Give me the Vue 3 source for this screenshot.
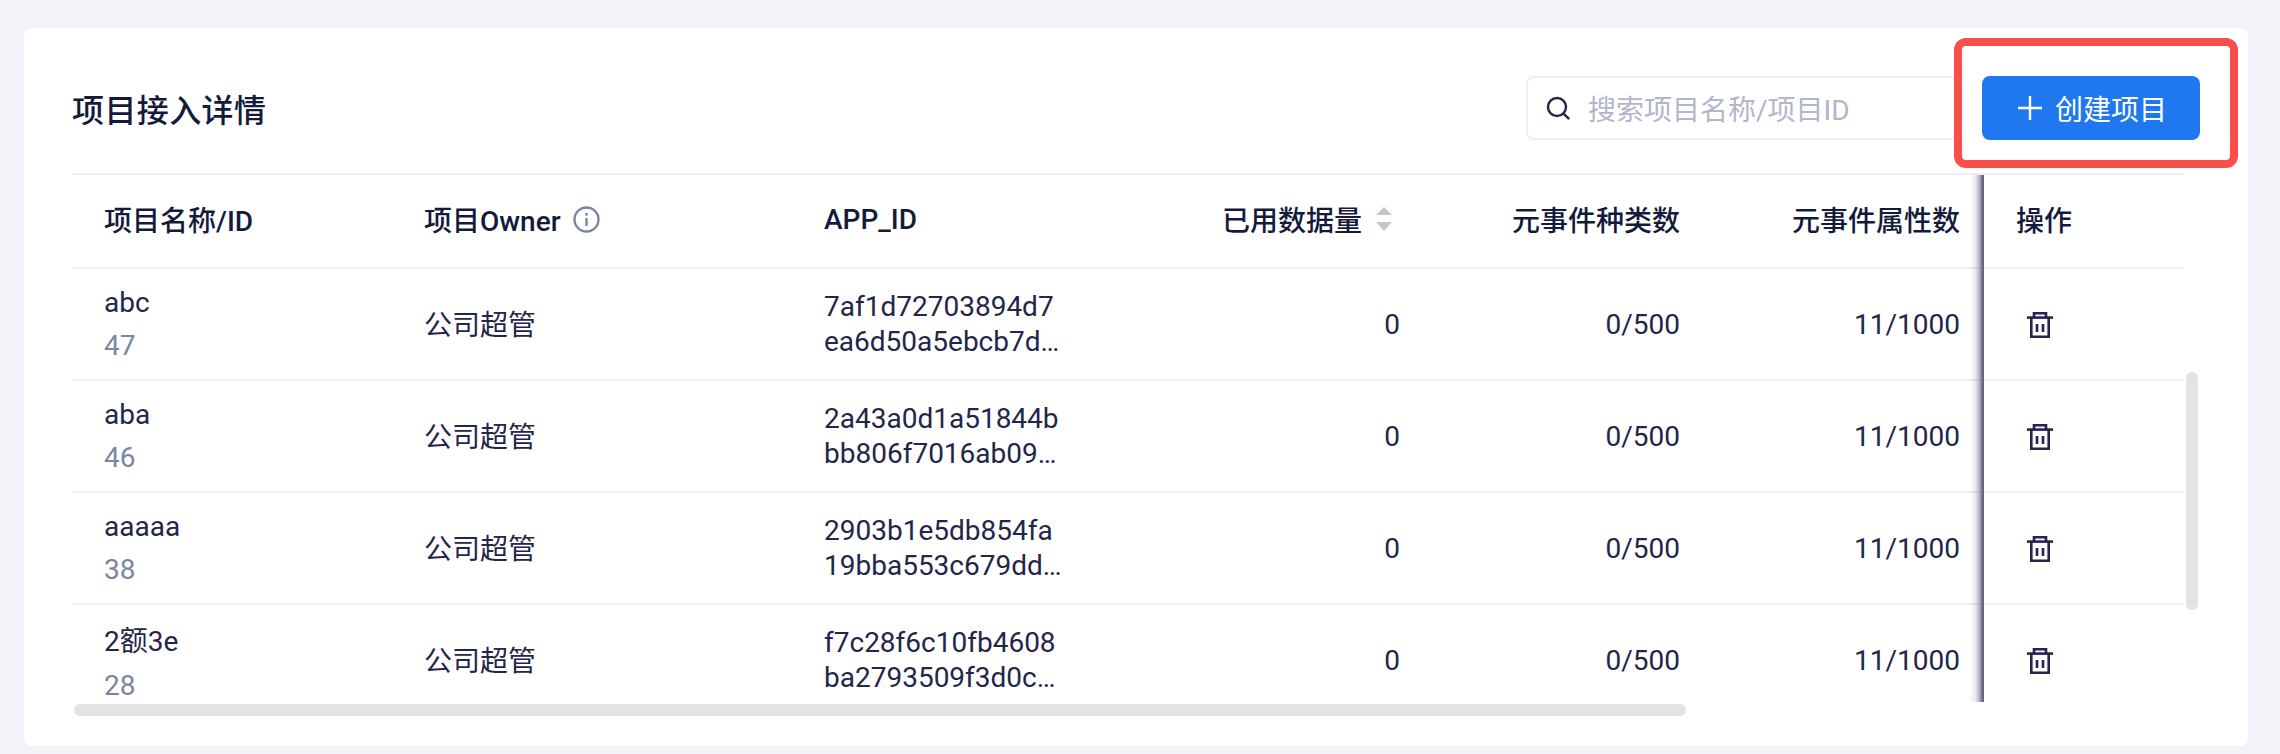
<template>
  <div class="page">
    <div class="card">
      <div class="head">
        <div class="title">项目接入详情</div>
        <div class="search">
          <svg class="search-icon" viewBox="0 0 24 24" fill="none" stroke="#23264a" stroke-width="2.4" stroke-linecap="round">
            <circle cx="11" cy="11" r="9" />
            <path d="M17.6 17.6L22.4 22.4" />
          </svg>
          <span class="placeholder">搜索项目名称/项目ID</span>
        </div>
        <div class="btn">
          <svg class="plus" viewBox="0 0 24 24" fill="none" stroke="#fff" stroke-width="2.4">
            <path d="M12 0V24M0 12H24" />
          </svg>
          <span>创建项目</span>
        </div>
        <div class="mark"></div>
      </div>

      <div class="table">
        <div class="row row-head">
          <div class="cell">项目名称/ID</div>
          <div class="cell">
            项目Owner
            <svg class="info" viewBox="0 0 27 27" fill="none" stroke="#7a85a3" stroke-width="2.4">
              <circle cx="13.5" cy="13.5" r="12" />
              <path d="M13.5 12V20" />
              <path d="M13.5 7V9.6" />
            </svg>
          </div>
          <div class="cell">APP_ID</div>
          <div class="cell right">
            已用数据量
            <svg class="sort" viewBox="0 0 16 24">
              <path d="M8 0L16 8H0Z" fill="#c6c6c6" />
              <path d="M8 24L0 15H16Z" fill="#c6c6c6" />
            </svg>
          </div>
          <div class="cell right">元事件种类数</div>
          <div class="cell right">元事件属性数</div>
          <div class="cell op">操作</div>
        </div>

        <div class="row" v-for="item in rows" :key="item.id">
          <div class="cell name">
            <div>{{ item.name }}</div>
            <div class="sub">{{ item.id }}</div>
          </div>
          <div class="cell owner">公司超管</div>
          <div class="cell">
            <div class="appid">{{ item.appId }}</div>
          </div>
          <div class="cell right">0</div>
          <div class="cell right">0/500</div>
          <div class="cell right">11/1000</div>
          <div class="cell op">
            <svg class="trash" viewBox="0 0 26 26" fill="none" stroke="#23264a" stroke-width="2.6">
              <path d="M0 5.6H26" />
              <path d="M7 5.6V1.3H19V5.6" />
              <path d="M4.3 5.6V24.7H21.7V5.6" />
              <path d="M10 12V20M16 12V20" />
            </svg>
          </div>
        </div>

        <div class="fixed-shadow"></div>
      </div>

      <div class="scroll-x"></div>
      <div class="scroll-y"></div>
    </div>
  </div>
</template>

<script setup>
const rows = [
  { name: 'abc', id: 47, appId: '7af1d72703894d7ea6d50a5ebcb7d3e1f0' },
  { name: 'aba', id: 46, appId: '2a43a0d1a51844bbb806f7016ab09c2e4d' },
  { name: 'aaaaa', id: 38, appId: '2903b1e5db854fa19bba553c679dd8a07b' },
  { name: '2额3e', id: 28, appId: 'f7c28f6c10fb4608ba2793509f3d0c6e1a' }
]
</script>

<style>
html,
body {
  margin: 0;
  background: #f1f3f8;
}
</style>

<style scoped>
.page {
  width: 2280px;
  height: 754px;
  padding: 28px 32px 8px 24px;
  box-sizing: border-box;
  background: #f1f3f8;
  overflow: hidden;
  font-family: Roboto, "Noto Sans CJK SC", sans-serif;
  font-size: 28px;
  color: #23264a;
}

.card {
  position: relative;
  height: 718px;
  padding: 0 64px 0 48px;
  background: #fff;
  border-radius: 8px;
}

.head {
  position: relative;
  display: flex;
  align-items: center;
  height: 145px;
  padding-top: 15px;
  box-sizing: border-box;
}

.title {
  flex: 1;
  font-size: 32px;
  font-weight: 500;
  letter-spacing: 0.4px;
  color: #141a3c;
}

.search {
  display: flex;
  align-items: center;
  gap: 18px;
  width: 432px;
  height: 64px;
  padding-left: 18px;
  margin-right: 24px;
  box-sizing: border-box;
  border: 2px solid #eeeff4;
  border-radius: 8px;
}

.search-icon {
  width: 24px;
  height: 24px;
}

.placeholder {
  color: #b1b6c8;
}

.btn {
  display: flex;
  align-items: center;
  gap: 13px;
  width: 218px;
  height: 64px;
  padding-left: 36px;
  margin-right: -16px;
  box-sizing: border-box;
  border-radius: 8px;
  background: #1f78f0;
  color: #fff;
}

.plus {
  width: 24px;
  height: 24px;
}

/* 红色标注框 */
.mark {
  position: absolute;
  left: 1882px;
  top: 10px;
  width: 284px;
  height: 130px;
  box-sizing: border-box;
  border: 8px solid #fa4e4a;
  border-radius: 12px;
}

.table {
  position: relative;
  height: 529px;
  overflow: hidden;
  border-top: 2px solid #eeeef4;
  box-sizing: border-box;
}

.row {
  display: grid;
  grid-template-columns: 320px 400px 368px 264px 280px 280px 200px;
  height: 110px;
  border-bottom: 2px solid #eeeef4;
}

.row-head {
  height: 92px;
  font-weight: 500;
  color: #141a3c;
}

.row-head .cell {
  padding-bottom: 4px;
}

.cell {
  display: flex;
  align-items: center;
  padding: 0 24px 0 32px;
  min-width: 0;
  box-sizing: border-box;
}

.right {
  justify-content: flex-end;
}

.name {
  flex-direction: column;
  align-items: flex-start;
  justify-content: center;
  gap: 10px;
}

.owner {
  padding-bottom: 3px;
}

.sub {
  color: #7a85a3;
}

.appid {
  width: 240px;
  line-height: 35px;
  word-break: break-all;
  display: -webkit-box;
  -webkit-box-orient: vertical;
  -webkit-line-clamp: 2;
  overflow: hidden;
}

.info {
  width: 27px;
  height: 27px;
  margin-left: 12px;
}

.sort {
  width: 16px;
  height: 24px;
  margin-left: 14px;
  margin-right: 8px;
}

.trash {
  width: 26px;
  height: 26px;
  margin: 2px 0 0 11px;
}

.fixed-shadow {
  position: absolute;
  left: 1898px;
  top: -2px;
  bottom: 0;
  width: 14px;
  background: linear-gradient(90deg, rgba(92, 92, 126, 0), rgba(92, 92, 126, 0.14) 40%, rgba(92, 92, 126, 0.5) 70%, rgba(92, 92, 126, 0.88) 86%, #5c5c7e 100%);
}

.scroll-x {
  position: absolute;
  left: 50px;
  top: 676px;
  width: 1612px;
  height: 12px;
  border-radius: 6px;
  background: #e3e3e3;
}

.scroll-y {
  position: absolute;
  left: 2162px;
  top: 344px;
  width: 12px;
  height: 238px;
  border-radius: 6px;
  background: #e3e3e3;
}
</style>
